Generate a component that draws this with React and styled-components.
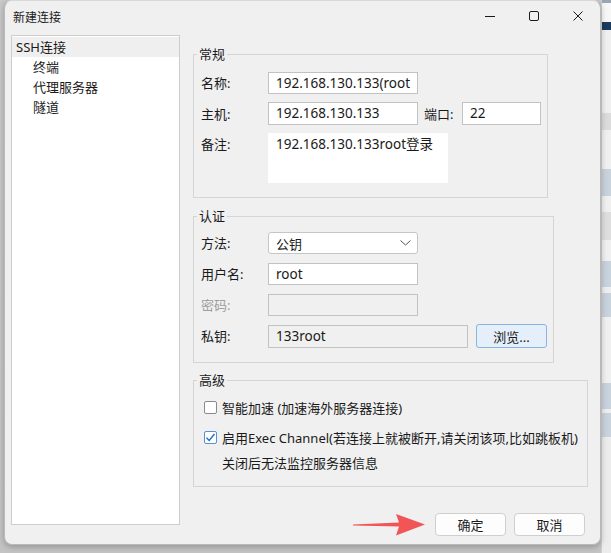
import React from "react";
import styled, { createGlobalStyle } from "styled-components";

const GlobalStyle = createGlobalStyle`
  html, body {
    margin: 0;
    padding: 0;
    background: #c9c9c9;
  }
  body {
    font-family: "Noto Sans", "Noto Sans CJK SC", sans-serif;
    font-size: 13px;
    color: #1a1a1a;
  }
`;

const stripBars = [
  { h: 3, c: "#9aa6b2" },
  { h: 19, c: "#f7f7f7" },
  { h: 8, c: "#1d3b5c" },
  { h: 83, c: "#f0f0f0" },
  { h: 17, c: "#dcdcdc" },
  { h: 39, c: "#f0f0f0" },
  { h: 27, c: "#c9d3dd" },
  { h: 16, c: "#f0f0f0" },
  { h: 28, c: "#dedede" },
  { h: 21, c: "#f0f0f0" },
  { h: 26, c: "#c9d3dd" },
  { h: 6, c: "#eeeeee" },
  { h: 24, c: "#c9d3dd" },
  { h: 66, c: "#f0f0f0" },
  { h: 26, c: "#c9d3dd" },
  { h: 4, c: "#eeeeee" },
  { h: 24, c: "#c9d3dd" },
  { h: 116, c: "#ececec" },
];

function Checkbox({ checked }) {
  return (
    <Box checked={checked}>
      {checked && (
        <svg width="11" height="11" viewBox="0 0 11 11">
          <polyline points="1.5,5.8 4.2,8.5 9.5,2" fill="none" stroke="#1c6fc6" strokeWidth="1.4" />
        </svg>
      )}
    </Box>
  );
}

export default function App() {
  return (
    <Page>
      <GlobalStyle />
      <Dialog>
        <TitleBar>
          <Title>新建连接</Title>
          <Controls>
            <CtrlButton aria-label="minimize">
              <svg width="10" height="10" viewBox="0 0 10 10">
                <line x1="0" y1="5.5" x2="10" y2="5.5" stroke="#1a1a1a" strokeWidth="1" />
              </svg>
            </CtrlButton>
            <CtrlButton aria-label="maximize">
              <svg width="10" height="10" viewBox="0 0 10 10">
                <rect x="0.5" y="0.5" width="9" height="9" rx="1.5" fill="none" stroke="#1a1a1a" strokeWidth="1" />
              </svg>
            </CtrlButton>
            <CtrlButton aria-label="close">
              <svg width="10" height="10" viewBox="0 0 10 10">
                <path d="M0.5 0.5 L9.5 9.5 M9.5 0.5 L0.5 9.5" stroke="#1a1a1a" strokeWidth="1" />
              </svg>
            </CtrlButton>
          </Controls>
        </TitleBar>

        <Body>
          <Tree>
            <TreeItem selected>SSH连接</TreeItem>
            <TreeItem level={1}>终端</TreeItem>
            <TreeItem level={1}>代理服务器</TreeItem>
            <TreeItem level={1}>隧道</TreeItem>
          </Tree>

          <Main>
            <Group width={355} top={10}>
              <Legend>常规</Legend>
              <GroupBody pt={9} pb={14}>
                <Row>
                  <Label>名称:</Label>
                  <Field width={150}>192.168.130.133(root</Field>
                </Row>
                <Row>
                  <Label>主机:</Label>
                  <Field width={150} height={23}>192.168.130.133</Field>
                  <Label width={38} style={{ marginLeft: 6 }}>端口:</Label>
                  <Field width={79} height={23}>22</Field>
                </Row>
                <Row align="flex-start">
                  <Label>备注:</Label>
                  <Note>192.168.130.133root登录</Note>
                </Row>
              </GroupBody>
            </Group>

            <Group width={361} top={9}>
              <Legend>认证</Legend>
              <GroupBody pt={7} pb={14} gap={9}>
                <Row>
                  <Label>方法:</Label>
                  <Select>
                    <span>公钥</span>
                    <svg width="11" height="6" viewBox="0 0 11 6">
                      <polyline points="0.5,0.5 5.5,5 10.5,0.5" fill="none" stroke="#555" strokeWidth="1" />
                    </svg>
                  </Select>
                </Row>
                <Row>
                  <Label>用户名:</Label>
                  <Field width={150}>root</Field>
                </Row>
                <Row>
                  <Label disabled>密码:</Label>
                  <Field width={150} disabled />
                </Row>
                <Row tight>
                  <Label>私钥:</Label>
                  <Field width={200} disabled height={23}>133root</Field>
                  <BrowseButton>浏览...</BrowseButton>
                </Row>
              </GroupBody>
            </Group>

            <Group width={395} top={8}>
              <Legend>高级</Legend>
              <GroupBody pt={8} pb={13} gap={0} indent={10}>
                <CheckRow>
                  <Checkbox />
                  <span>智能加速 (加速海外服务器连接)</span>
                </CheckRow>
                <CheckRow mt={10}>
                  <Checkbox checked />
                  <span>启用Exec Channel(若连接上就被断开,请关闭该项,比如跳板机)</span>
                </CheckRow>
                <Hint>关闭后无法监控服务器信息</Hint>
              </GroupBody>
            </Group>

            <Footer>
              <svg width="74" height="22" viewBox="0 0 74 22">
                <polygon
                  points="0,10.6 46,8.6 43,0 72,10.6 43,21.5 46,12.6 0,11.4"
                  fill="#f25555"
                />
              </svg>
              <DialogButton>确定</DialogButton>
              <DialogButton>取消</DialogButton>
            </Footer>
          </Main>
        </Body>
      </Dialog>
      <BackStrip>
        {stripBars.map((b, i) => (
          <StripBar key={i} style={{ height: b.h, background: b.c }} />
        ))}
      </BackStrip>
    </Page>
  );
}

const Page = styled.div`
  display: flex;
  width: 611px;
  height: 553px;
  padding-left: 4px;
  box-sizing: border-box;
  overflow: hidden;
  background: linear-gradient(#c9c9c9, #c4c4c4);
`;

const Dialog = styled.div`
  width: 597px;
  height: 545px;
  box-sizing: border-box;
  background: #f0f0f0;
  border: 1px solid #b9b9b9;
  border-top-color: #d8d8d8;
  border-radius: 8px;
  box-shadow: 0 2px 6px rgba(0, 0, 0, 0.25);
  display: flex;
  flex-direction: column;
  position: relative;
  z-index: 1;
  flex-shrink: 0;
`;

const TitleBar = styled.div`
  height: 30px;
  display: flex;
  align-items: center;
  justify-content: space-between;
  padding-left: 8px;
`;

const Title = styled.div`
  font-size: 12px;
  color: #1a1a1a;
  padding-top: 1px;
`;

const Controls = styled.div`
  display: flex;
  height: 100%;
`;

const CtrlButton = styled.div`
  width: 44px;
  height: 30px;
  display: flex;
  align-items: center;
  justify-content: center;
`;

const Body = styled.div`
  display: flex;
  padding: 4px 0 0 6px;
`;

const Tree = styled.div`
  width: 169px;
  height: 490px;
  box-sizing: border-box;
  background: #fff;
  border: 1px solid #cdcdcd;
  padding-top: 1px;
  flex-shrink: 0;
`;

const TreeItem = styled.div`
  height: 20px;
  line-height: 20px;
  padding-left: ${(p) => (p.level ? 21 : 4)}px;
  background: ${(p) => (p.selected ? "#efefef" : "transparent")};
  white-space: nowrap;
`;

const Main = styled.div`
  margin-left: 13px;
  display: flex;
  flex-direction: column;
  width: 395px;
`;

const Group = styled.fieldset`
  margin: ${(p) => p.top}px 0 0 0;
  padding: 0;
  width: ${(p) => p.width}px;
  box-sizing: border-box;
  border: 1px solid #d5d5d5;
  min-inline-size: 0;
`;

const Legend = styled.legend`
  font-size: 13px;
  line-height: 18px;
  padding: 0 2px;
  margin-left: 3px;
`;

const GroupBody = styled.div`
  display: flex;
  flex-direction: column;
  gap: ${(p) => (p.gap ?? 8)}px;
  padding: ${(p) => p.pt}px 0 ${(p) => p.pb}px ${(p) => p.indent ?? 7}px;
`;

const Row = styled.div`
  display: flex;
  align-items: ${(p) => p.align || "center"};
  margin-top: ${(p) => (p.tight ? -1 : 0)}px;
`;

const Label = styled.div`
  width: ${(p) => p.width || 67}px;
  flex-shrink: 0;
  line-height: 22px;
  white-space: nowrap;
  color: ${(p) => (p.disabled ? "#9d9d9d" : "#1a1a1a")};
`;

const Field = styled.div`
  width: ${(p) => p.width}px;
  height: ${(p) => p.height || 22}px;
  box-sizing: border-box;
  border: 1px solid #c2c2c2;
  background: ${(p) => (p.disabled ? "#f0f0f0" : "#fff")};
  padding: 0 7px;
  line-height: ${(p) => (p.height || 22) - 2}px;
  font-size: 13.5px;
  white-space: nowrap;
  overflow: hidden;
  flex-shrink: 0;
`;

const Note = styled.div`
  width: 180px;
  height: 50px;
  box-sizing: border-box;
  background: #fff;
  padding: 2px 8px 0;
  line-height: 18px;
  font-size: 13.5px;
  white-space: nowrap;
`;

const Select = styled.div`
  width: 150px;
  height: 22px;
  box-sizing: border-box;
  border: 1px solid #c6c6c6;
  border-radius: 3px;
  background: #fff;
  display: flex;
  align-items: center;
  justify-content: space-between;
  padding: 0 6px 0 7px;
`;

const BrowseButton = styled.div`
  width: 71px;
  height: 24px;
  box-sizing: border-box;
  margin-left: 8px;
  border: 1px solid #86b5e6;
  border-radius: 3px;
  background: #e4effa;
  display: flex;
  align-items: center;
  justify-content: center;
`;

const CheckRow = styled.div`
  display: flex;
  align-items: center;
  height: 20px;
  margin-top: ${(p) => p.mt || 0}px;
  white-space: nowrap;
`;

const Box = styled.span`
  width: 13px;
  height: 13px;
  box-sizing: border-box;
  border: 1px solid ${(p) => (p.checked ? "#5c8fd0" : "#8a8a8a")};
  border-radius: 2px;
  background: #fff;
  margin-right: 5px;
  display: inline-flex;
  align-items: center;
  justify-content: center;
`;

const Hint = styled.div`
  margin: 6px 0 0 18px;
  height: 20px;
  line-height: 20px;
`;

const Footer = styled.div`
  display: flex;
  justify-content: flex-end;
  align-items: center;
  gap: 8px;
  margin-top: 26px;
  padding-right: 3px;
`;

const DialogButton = styled.div`
  width: 71px;
  height: 23px;
  box-sizing: border-box;
  border: 1px solid #cfcfcf;
  border-radius: 4px;
  background: #fdfdfd;
  display: flex;
  align-items: center;
  justify-content: center;
`;

const BackStrip = styled.div`
  flex: 1;
  display: flex;
  flex-direction: column;
  border-left: 1px solid #d0d0d0;
`;

const StripBar = styled.div`
  flex-shrink: 0;
`;
